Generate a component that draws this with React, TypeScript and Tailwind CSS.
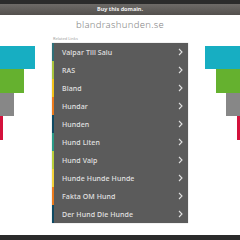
import React from "react";

const rows = [
  { label: "Valpar Till Salu", color: "#2f6f78" },
  { label: "RAS", color: "#a8c43c" },
  { label: "Bland", color: "#f2c21b" },
  { label: "Hundar", color: "#ec7a1c" },
  { label: "Hunden", color: "#0f4a63" },
  { label: "Hund Liten", color: "#2a9a86" },
  { label: "Hund Valp", color: "#b9cf3a" },
  { label: "Hunde Hunde Hunde", color: "#f3d23a" },
  { label: "Fakta OM Hund", color: "#ec7a1c" },
  { label: "Der Hund Die Hunde", color: "#0f4a63" },
];

function Chevron() {
  return (
    <svg width="5" height="8" viewBox="0 0 5 8" className="shrink-0">
      <path d="M1 1 L4 4 L1 7" fill="none" stroke="#e0e0e0" strokeWidth="1.1" />
    </svg>
  );
}

export default function App() {
  return (
    <div
      className="w-[240px] h-[240px] bg-white flex flex-col overflow-hidden relative"
      style={{ fontFamily: "'Noto Sans', 'Open Sans', sans-serif" }}
    >
      <div className="h-[4px] bg-[#2b2b2b]" />
      <div className="h-[11px] bg-gradient-to-b from-[#6e6b68] to-[#53504d] flex items-center justify-center">
        <span className="text-[5.5px] font-bold text-[#f0f0f0] leading-none">Buy this domain.</span>
      </div>
      <div className="flex-1 relative">
        <div className="absolute left-0 top-[31px] flex flex-col items-start">
          <div className="w-[35px] h-[23px] bg-[#17aec2]" />
          <div className="w-[24px] h-[24px] bg-[#65b12f]" />
          <div className="w-[14px] h-[23px] bg-[#878787]" />
          <div className="w-[3px] h-[24px] bg-[#d4123c]" />
        </div>
        <div className="absolute right-0 top-[31px] flex flex-col items-end">
          <div className="w-[35px] h-[23px] bg-[#17aec2]" />
          <div className="w-[24px] h-[24px] bg-[#65b12f]" />
          <div className="w-[14px] h-[23px] bg-[#878787]" />
          <div className="w-[3px] h-[24px] bg-[#d4123c]" />
        </div>
        <div className="flex flex-col items-center">
          <div className="h-[20px] flex items-center text-[9.5px] font-light text-[#858585] tracking-[0.3px] leading-none">
            blandrashunden.se
          </div>
          <div className="w-[136px] h-[8px] flex items-center text-[4px] text-[#a0a0a0] leading-none pl-[1px]">
            Related Links
          </div>
          <div className="w-[136px] flex flex-col bg-[#5b5b5b] shadow-[0_0_1px_rgba(0,0,0,0.3)]">
            {rows.map((r) => (
              <div
                key={r.label}
                className="h-[18px] flex items-center border-l-[2px] pl-[8px] pr-[5px]"
                style={{ borderLeftColor: r.color }}
              >
                <span className="flex-1 text-[7px] font-medium text-[#e2e2e2] tracking-[0.1px] leading-none">{r.label}</span>
                <Chevron />
              </div>
            ))}
          </div>
        </div>
      </div>
      <div className="h-[5px] bg-[#2b2b2b]" />
    </div>
  );
}
